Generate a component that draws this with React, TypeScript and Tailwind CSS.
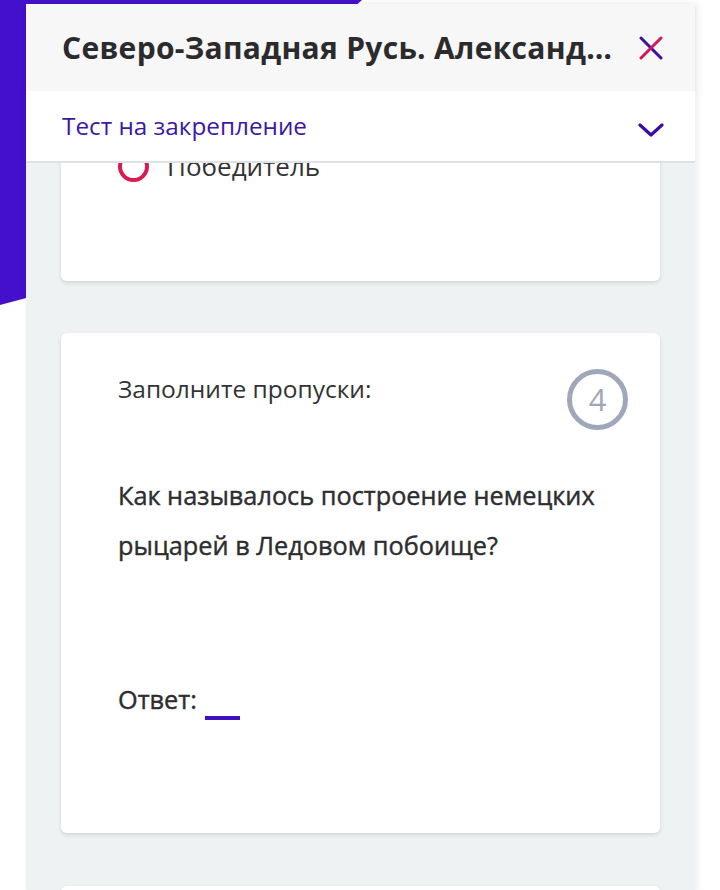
import React from 'react';

const font = { fontFamily: '"Open Sans", "Noto Sans", sans-serif' };

const CloseIcon: React.FC = () => (
  <svg width="24" height="24" viewBox="0 0 24 24" fill="none">
    <line x1="2" y1="2" x2="22" y2="22" stroke="#3b0ca6" strokeWidth="3" strokeLinecap="round" />
    <line x1="22" y1="2" x2="2" y2="22" stroke="#d3175c" strokeWidth="3" strokeLinecap="round" />
  </svg>
);

const Chevron: React.FC = () => (
  <svg width="26" height="16" viewBox="0 0 26 16" fill="none">
    <polyline points="2,3 13,13 24,3" stroke="#3a0ca3" strokeWidth="3.2" strokeLinecap="round" strokeLinejoin="round" />
  </svg>
);

const App: React.FC = () => {
  return (
    <div className="relative h-[890px] w-[720px] overflow-hidden bg-white" style={font}>
      {/* purple decoration behind the panel */}
      <div
        className="absolute left-0 top-0 h-[310px] w-[365px] bg-[#4510cc]"
        style={{ clipPath: 'polygon(0 0, 362px 0, 30px 297px, 0 305px)' }}
      />

      <div className="relative ml-[26px] mt-[4px] w-[669px] bg-[#eef2f3] shadow-[2px_0_8px_rgba(0,0,0,0.08)]">
        {/* title bar */}
        <div className="flex h-[87px] items-center justify-between bg-[#f7f7f7] pl-[36px] pr-[32px] shadow-[0_1px_3px_rgba(0,0,0,0.08)]">
          <h1 className="min-w-0 flex-1 whitespace-nowrap text-[30px] font-bold tracking-[0.3px] text-[#2b2b2e]">
            Северо-Западная Русь. Александ…
          </h1>
          <CloseIcon />
        </div>

        {/* section selector */}
        <div className="relative z-10 flex h-[72px] items-center justify-between border-b-2 border-[#dde2e4] bg-white pl-[36px] pr-[31px]">
          <span className="text-[24.3px] text-[#3a1aa0]">Тест на закрепление</span>
          <span className="mt-[8px]">
            <Chevron />
          </span>
        </div>

        {/* questions */}
        <div className="h-[730px] overflow-hidden px-[35px]">
          <div className="-mt-[21px] rounded-[6px] bg-white pb-[91px] shadow-[0_2px_4px_rgba(0,0,0,0.12)]">
            <div className="flex h-[48px] items-center pl-[57px]">
              <span className="h-[31px] w-[31px] rounded-full border-4 border-[#d81b50]" />
              <span className="ml-[18px] text-[26px] text-[#333]">Победитель</span>
            </div>
          </div>

          <div className="mt-[52px] rounded-[6px] bg-white pb-[108px] pt-[36px] shadow-[0_2px_4px_rgba(0,0,0,0.12)]">
            <div className="flex items-start justify-between pl-[57px] pr-[32px]">
              <span className="mt-[5px] text-[24.5px] leading-[30px] text-[#333]">Заполните пропуски:</span>
              <span className="flex h-[61px] w-[61px] items-center justify-center rounded-full border-[5px] border-[#9ea8b8] text-[31px] text-[#9ea8b8]">
                4
              </span>
            </div>
            <p className="mt-[40px] pl-[57px] pr-[32px] text-[25.3px] leading-[50px] text-[#2d2d2f] [-webkit-text-stroke:0.4px_#2d2d2f]">
              Как называлось построение немецких рыцарей в Ледовом побоище?
            </p>
            <div className="mt-[105px] flex h-[50px] items-center pl-[57px]">
              <span className="text-[25.3px] text-[#2d2d2f] [-webkit-text-stroke:0.4px_#2d2d2f]">Ответ:</span>
              <span className="ml-[8px] mt-[36px] h-[4px] w-[35px] bg-[#3f10c0]" />
            </div>
          </div>

          <div className="mt-[53px] h-[60px] rounded-[6px] bg-white shadow-[0_2px_4px_rgba(0,0,0,0.12)]" />
        </div>
      </div>
    </div>
  );
};

export default App;
